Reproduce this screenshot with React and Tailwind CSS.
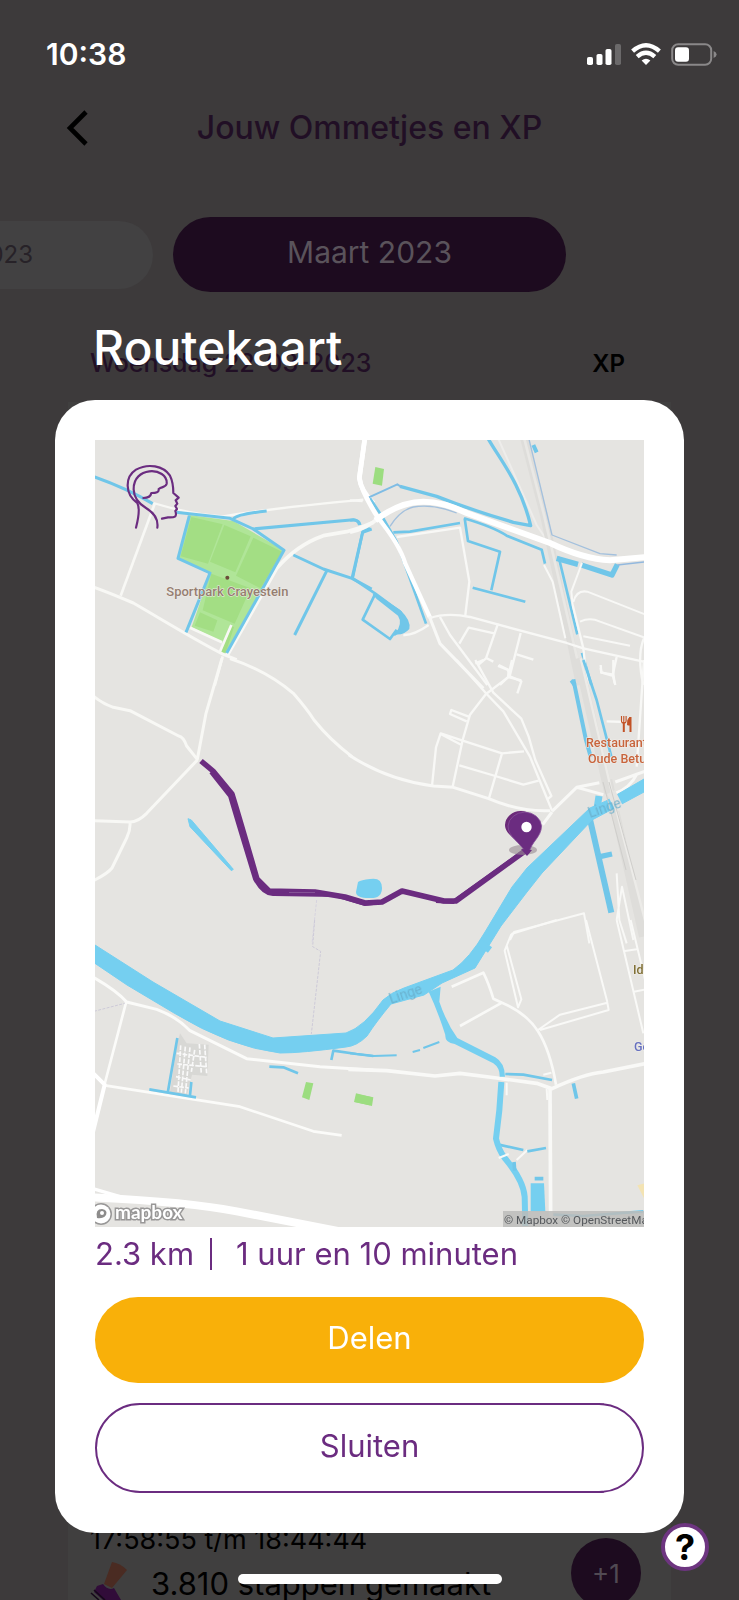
import React from "react";

const WATER = "#75cff0";
const DITCH = "#70c6e9";
const PURPLE = "#6b2c80";

function StatusBar() {
  return (
    <div className="mt-8 flex h-11 items-center justify-between pl-[46px] pr-[22px]">
      <span className="text-[30px] leading-[44px] font-semibold text-white">10:38</span>
      <div className="flex items-center gap-[10px]">
        <svg width="34" height="22" viewBox="0 0 34 22" aria-hidden="true">
          <rect x="0" y="14" width="6" height="8" rx="1.8" fill="#fff" />
          <rect x="9.5" y="11" width="6" height="11" rx="1.8" fill="#fff" />
          <rect x="18.5" y="6" width="6" height="16" rx="1.8" fill="#fff" />
          <rect x="28" y="1" width="6" height="21" rx="1.8" fill="#6b696a" />
        </svg>
        <svg width="30" height="22" viewBox="0 0 30 22" aria-hidden="true">
          <g fill="none" stroke="#fff" strokeWidth="4.4">
            <path d="M1.6 8.2 Q15 -3.6 28.4 8.2" />
            <path d="M6.2 13.6 Q15 6 23.8 13.6" />
          </g>
          <path d="M10.6 17.6 Q15 14 19.4 17.6 L15 22Z" fill="#fff" />
        </svg>
        <svg width="46" height="23" viewBox="0 0 46 23" aria-hidden="true">
          <rect x="1.2" y="1.2" width="39" height="20.6" rx="6" fill="none" stroke="#8a8889" strokeWidth="2" />
          <rect x="4" y="4.3" width="14" height="14.4" rx="3" fill="#fff" />
          <path d="M42.6 8 Q45.6 9.4 45.6 11.5 T42.6 15Z" fill="#8a8889" />
        </svg>
      </div>
    </div>
  );
}

function ActivityPage() {
  return (
    <div className="col-start-1 row-start-1 flex min-w-0 flex-col overflow-hidden">
      <StatusBar />
      <header className="mt-6 grid h-14 grid-cols-[108px_1fr_108px] items-center">
        <button type="button" aria-label="Terug" className="flex h-14 items-center pl-[66px]">
          <svg width="22" height="36" viewBox="0 0 22 36" aria-hidden="true">
            <path d="M20 2 L4 18 L20 34" fill="none" stroke="#000" strokeWidth="4.6" />
          </svg>
        </button>
        <h1 className="text-center text-[32px] leading-[48px] font-medium text-[#210f25]">Jouw Ommetjes en XP</h1>
      </header>

      <div className="mt-[61px] flex items-center gap-5">
        <button
          type="button"
          className="flex h-[68px] w-[153px] shrink-0 items-center justify-end rounded-r-[34px] bg-[#424142] pr-[120px] text-[24px] whitespace-nowrap text-[#272228]"
        >
          Februari 2023
        </button>
        <button
          type="button"
          className="h-[75px] w-[393px] shrink-0 rounded-full bg-[#1d0b1f] pb-1 text-[30px] text-[#5a535b]"
        >
          Maart 2023
        </button>
      </div>

      <div className="mt-[50px] flex h-11 items-center justify-between pl-[90px] pr-[114px]">
        <h2 className="text-[25px] font-medium text-[#210f25]">Woensdag 22-03-2023</h2>
        <span className="text-[24px] font-semibold text-black">XP</span>
      </div>

      <div className="mx-[68px] mt-4 flex flex-1 flex-col justify-end bg-[#403f3f] pr-[30px] pl-[22px] text-black">
        <div className="flex h-[76px] items-start justify-between">
          <div>
            <p className="text-[27px] leading-[32px]">17:58:55 t/m 18:44:44</p>
            <div className="mt-3 flex h-8 items-start gap-6">
              <svg className="mt-[-6px] shrink-0" width="37" height="38" viewBox="0 0 37 38" aria-hidden="true">
                <path d="M22 0 Q30 1 37 8 L22 26 L14 22Z" fill="#4a2b22" />
                <path d="M7 24 L13 22 Q18 29 24 26 L31 38 L13 38 L4 30Z" fill="#310c39" />
                <path d="M1 31 L9 38 M4 28 L15 38" fill="none" stroke="#16091a" strokeWidth="1.6" />
              </svg>
              <p className="text-[31px] leading-[32px] whitespace-nowrap">3.810 stappen gemaakt</p>
            </div>
          </div>
          <div className="mt-[14px] flex size-[70px] shrink-0 items-center justify-center rounded-full bg-[#1d0b1f] text-[26px] text-[#514a53]">
            +1
          </div>
        </div>
      </div>
    </div>
  );
}

function RouteMap() {
  return (
    <svg
      viewBox="95 440 549 787"
      className="block h-auto w-full overflow-hidden bg-[#e5e4e1] font-[Roboto,sans-serif]"
      role="img"
      aria-label="Routekaart"
    >
      {/* north-west */}
      <g transform="translate(90 435) scale(.33333)" fill="none" strokeLinejoin="round">
        <path d="M298 240 L430 258 L582 346 L408 654 L388 656 L398 622 L305 576 L360 416 L264 370Z" fill="#b0e598" />
        <path d="M304 246 L398 268 L354 386 L272 364Z M403 270 L482 304 L436 412 L360 380Z M490 308 L576 350 L512 460 L438 422Z M364 416 L482 460 L434 566 L338 526Z M330 532 L382 556 L370 590 L314 572Z M422 572 L432 576 L408 650 L390 656Z" fill="#a3de84" />
        <g stroke="#f8f8f5" strokeWidth="8">
          <path d="M195 204 L92 482" />
          <path d="M190 204 Q310 240 400 244 Q560 218 820 194" strokeWidth="7" />
          <path d="M10 456 Q60 474 130 504 C220 556 320 618 400 658 L440 674" strokeWidth="9" />
          <path d="M410 664 L560 400 Q620 330 700 302 L770 290 Q810 280 850 262" strokeWidth="11" />
          <path d="M398 664 L374 752 M300 578 L396 622 M424 570 L388 654" strokeWidth="8" />
          <path d="M826 0 L808 130 Q812 165 850 205" stroke="#fff" strokeWidth="14" />
        </g>
        <g stroke={DITCH} strokeWidth="9">
          <path d="M14 126 Q110 160 188 206 M258 232 L420 250 L490 282 L582 346 L410 654 M298 242 L264 370 L360 414 L288 592" />
          <path d="M430 252 Q440 238 530 228 M488 282 L790 254 Q808 256 810 270 M610 360 L700 402 L786 430 L845 462 M712 404 L614 600 M786 430 L818 292 L845 282" />
        </g>
        <g stroke={PURPLE} strokeWidth="6.5" strokeLinecap="round">
          <path d="M138 278 C148 240 148 216 142 204 C104 178 104 126 138 104 C174 84 220 92 240 122 C250 142 250 160 250 174 L266 188 L257 196 L262 206 L256 213 L261 222 L256 228 C262 246 254 248 234 247 L216 251" />
          <path d="M202 278 C206 248 190 232 168 219 C144 205 132 190 131 164 C130 128 154 112 178 109 C206 106 232 121 230 146 C228 158 216 154 206 162 C208 172 198 174 184 174 C182 186 174 189 160 189" />
        </g>
        <circle cx="412" cy="428" r="6" fill="#6b4c39" />
        <text x="412" y="482" fontSize="39" fontWeight="500" textAnchor="middle" fill="#967e71" stroke="#f0eeea" strokeWidth="3" paintOrder="stroke">Sportpark Crayestein</text>
      </g>

      {/* north-east */}
      <g transform="translate(350 435) scale(.33333)" fill="none" strokeLinejoin="round">
        <path d="M440 0 L560 270 L600 330 L690 750" stroke="#eeedeb" strokeWidth="6" />
        <path d="M520 0 L582 240 L690 750" stroke="#dedddA" strokeWidth="24" />
        <path d="M520 0 L582 240 L700 750" stroke="#e9e8e5" strokeWidth="8" />
        <g stroke={DITCH} strokeWidth="8">
          <path d="M408 0 C450 76 510 140 542 272 L490 262 Q360 224 260 184 L150 154" strokeWidth="10" />
          <path d="M55 188 L142 148 L154 156" stroke="#7fbce4" strokeWidth="6" />
          <path d="M120 274 Q150 226 190 216 Q250 206 320 234 M534 0 L606 300 M606 300 L750 356 L800 360" stroke="#a3c0dd" strokeWidth="4" />
          <path d="M130 292 L180 290 L330 264" />
          <path d="M342 250 Q430 276 470 302 L575 344 L585 386 M344 250 L354 318 L450 350 L424 466 M368 458 L526 500" />
          <path d="M60 190 L100 250 L140 320 L228 566" />
          <path d="M0 256 Q24 250 28 270 M60 280 L38 290 L8 430 L76 476 L152 532 L168 574 L132 600 M76 476 L38 554 L120 612 L140 584" />
          <path d="M620 370 L684 388 M694 390 L786 420 L802 388" strokeWidth="16" />
          <path d="M802 390 L890 380" stroke="#92b8de" strokeWidth="5" />
          <path d="M626 366 L682 598 M696 654 L724 750" />
          <path d="M664 736 L674 750 M550 30 L560 52" strokeWidth="12" />
        </g>
        <path d="M68 478 L76 476 L150 524 Q184 556 178 582 Q160 602 134 598 Q160 566 144 542 L80 492Z" fill={DITCH} />
        <g stroke="#f8f8f6" strokeWidth="7">
          <path d="M46 0 L28 128 Q34 170 85 250" strokeWidth="14" stroke="#fff" />
          <path d="M82 246 Q150 330 166 386 L240 548" strokeWidth="13" stroke="#fff" />
          <path d="M238 544 L270 626 L400 760" strokeWidth="9" />
          <path d="M0 292 Q50 280 90 246" strokeWidth="11" />
          <path d="M76 256 Q150 200 220 200 Q280 200 350 234 L600 324 Q700 372 780 376 L890 366" strokeWidth="18" stroke="#fff" />
          <path d="M0 196 L38 198 M140 306 L330 278 L358 440 L346 540 M238 550 Q290 532 360 546 L650 624 L700 640 L880 680" />
          <path d="M160 600 Q190 602 236 570 M270 546 L300 600 L412 750 M328 626 L356 578 L436 596 M444 566 L408 670 L384 690 M410 670 L430 680" />
          <path d="M512 594 L480 720 L450 750 M500 658 L550 674 M446 690 L478 706 L474 726 L514 736" />
          <path d="M582 390 L608 440 L646 610 M696 384 L664 470 L668 510 M670 500 Q680 464 712 470 L890 540 M690 560 Q720 546 750 560 L890 610 M700 604 L840 632" strokeWidth="6" />
          <path d="M668 510 L700 640 L712 750 M800 666 L788 720 L796 750 M752 690 L754 712 L786 722 M882 610 Q860 660 880 750" />
        </g>
        <path d="M76 96 L102 102 L96 152 L68 146Z" fill="#9cdd80" />
      </g>

      {/* centre-west */}
      <g transform="translate(90 660) scale(.33333)" fill="none" strokeLinejoin="round">
        <g stroke="#f8f8f5" strokeWidth="9">
          <path d="M396 -5 L348 160 L322 298 L290 258 Q280 230 266 228 L120 152 L70 142 Q36 130 10 108" />
          <path d="M322 300 L170 460 Q144 486 120 486 L10 482 M120 486 Q122 510 110 534 L66 624 Q54 640 10 662" />
          <path d="M420 -4 Q530 32 610 100 Q650 146 672 180 Q720 240 786 290" />
        </g>
        <path d="M680 720 L666 850" stroke="#d6d3df" strokeWidth="3" strokeDasharray="9 4" />
        <path d="M294 476 L304 480 L430 628 L424 632 L300 500Z" fill={WATER} stroke={WATER} strokeWidth="3" />
      </g>

      {/* centre-east */}
      <g transform="translate(350 660) scale(.33333)" fill="none" strokeLinejoin="round">
        <path d="M684 -5 L776 400 M774 360 L880 830" stroke="#deddda" strokeWidth="26" />
        <path d="M692 -5 L786 400 L895 820" stroke="#ecebe8" strokeWidth="7" />
        <g stroke="#f8f8f6" strokeWidth="7">
          <path d="M-4 284 Q110 360 250 378 L310 382 L416 416 Q510 456 600 452" strokeWidth="9" />
          <path d="M320 0 L410 102 L460 154 L540 290 L606 452 M376 0 L430 98 L514 176 L536 230 L556 300 L604 408 L592 418 L540 290" />
          <path d="M486 0 L474 52 L408 102 L360 164 L338 240 L308 380 M350 184 L300 162 L304 150 L356 170 M338 242 L272 220 L258 262 L246 378 M272 222 L336 256" />
          <path d="M338 242 L456 280 L522 274 M328 316 L436 348 L520 374 L566 362 M456 280 L416 418" />
          <path d="M606 456 L578 494 M606 454 L680 382 L748 368 M680 382 L760 404 M796 366 L890 332 M796 400 Q840 384 862 340" strokeWidth="9" />
          <path d="M376 10 L400 0 M444 18 L474 30 L478 48 L514 64 L502 100 M790 0 L790 42 L794 70 M752 24 L754 38 L790 44 M770 184 L830 186 M882 0 L860 320" />
          <path d="M480 840 L492 816 L702 760 L718 850 M800 640 L808 780 L830 850 M800 780 L816 680 L850 840" strokeWidth="6" />
        </g>
        <g stroke={DITCH}>
          <path d="M670 58 L708 240 L722 290" strokeWidth="12" />
          <path d="M700 0 L740 120 L784 290" strokeWidth="8" />
          <path d="M720 478 L784 758" strokeWidth="18" />
          <path d="M750 590 L786 582" strokeWidth="16" />
        </g>
      </g>

      {/* south-west */}
      <g transform="translate(90 920) scale(.33333)" fill="none" strokeLinejoin="round">
        <g stroke="#fbfbf9" strokeWidth="9">
          <path d="M10 172 Q80 212 110 246 L200 268 Q260 290 300 332 L470 416 L690 440 L850 450" />
          <path d="M108 248 L44 492 M44 496 L450 560 L670 634 L755 646" strokeWidth="8" />
          <path d="M8 458 L44 494 L8 640" stroke="#fff" strokeWidth="12" />
          <path d="M10 832 Q300 846 440 874 L780 940" stroke="#fff" strokeWidth="24" />
          <path d="M10 806 L90 830" stroke="#fff" strokeWidth="10" />
        </g>
        <path d="M12 274 L104 250 M674 0 L668 80 L692 94 L664 342" stroke="#cdcad8" strokeWidth="3" strokeDasharray="9 4" />
        <path d="M270 340 L290 370 L356 374 L352 468 L306 464 L290 528 L240 516 L260 380Z" fill="#d8d8d5" />
        <path d="M272 376 L264 516 M286 380 L274 518 M300 382 L286 520 M314 390 L304 456 M328 372 L334 462 M344 374 L350 462 M260 400 L350 412 M262 432 L350 440 M258 470 L302 480 M250 498 L296 504" stroke="#f9f9f9" strokeWidth="5" strokeDasharray="14 4" />
        <g stroke={DITCH} strokeWidth="8">
          <path d="M262 354 L234 514 M178 508 L318 532 M304 486 L300 526" />
          <path d="M538 440 L580 442 L624 460 M724 420 L730 392 L800 402 L850 408" />
        </g>
        <path d="M648 486 L670 490 L658 540 L636 532Z M800 522 L850 532 L846 558 L794 546Z" fill="#9cdd80" />
      </g>

      {/* south-east */}
      <g transform="translate(350 920) scale(.33333)" fill="none" strokeLinejoin="round">
        <g stroke="#f9f9f7" strokeWidth="8">
          <path d="M-5 448 L110 452 L255 468 L330 460 L440 474 L560 490 L606 506 Q700 462 760 456 L890 430" strokeWidth="11" />
          <path d="M305 200 L400 158 Q416 190 430 236 L456 248 L330 318 M456 248 Q530 280 564 334 Q600 390 618 494" />
          <path d="M484 42 L464 92 L504 262 L514 238 L470 76 M564 330 L630 284 L772 248 L776 270 L570 330 M772 246 L708 0 M484 42 L620 0" strokeWidth="6" />
          <path d="M600 506 L602 890" strokeWidth="11" />
          <path d="M470 488 L470 526 M590 506 L592 540 M500 720 L532 690 M580 464 L604 458" strokeWidth="6" />
          <path d="M800 0 L880 340 M842 0 L890 200 M820 94 L860 88 M848 216 L890 208" strokeWidth="6" />
        </g>
        <g stroke={DITCH}>
          <path d="M0 400 L70 408 L140 406 M188 396 L210 390 M220 384 L268 366" strokeWidth="6" />
          <path d="M466 462 L520 464 L606 480 M446 674 L520 690 M532 694 L588 684 M610 884 L700 888 L880 874" strokeWidth="8" />
          <path d="M454 486 Q450 570 438 656 Q446 690 464 714 Q520 780 524 830 L526 918" stroke={WATER} strokeWidth="18" />
          <path d="M492 726 L494 752 M670 490 L680 536 M554 776 L580 776" strokeWidth="11" />
        </g>
        <path d="M542 790 L582 790 L586 874 L542 874Z" fill={WATER} />
        <path d="M236 215 L272 200 L268 245 Q290 310 322 354 L436 412 Q464 428 465 470 L449 470 Q450 444 430 430 L314 372 Q284 368 286 345 Q262 270 236 215Z" fill={WATER} />
        <path d="M446 714 L476 702" stroke="#f9f9f7" strokeWidth="6" />
        <path d="M18 520 L66 532 L60 556 L12 546Z" fill="#9cdd80" />
        <path d="M862 796 L890 788 L890 850Z" fill="#f3e3b3" />
      </g>

      {/* river */}
      <path
        d="M90 941 L95 945 L153 982 L220 1021 L273 1038 L346 1033 Q364 1027 383 1000 Q392 992 404 988 L453 970 Q470 958 485 932 L512 887 L527 868 L590 808 L606 801 L644 779 L644 792 L607 812 L592 820 L542 873 L527 892 L501 926 L475 968 L442 983 L424 995 L391 1004 Q376 1022 367 1036 Q357 1046 346 1047 Q302 1053 280 1053 Q230 1047 174 1013 L127 985 L90 960Z"
        fill={WATER}
        stroke={WATER}
        strokeWidth="1"
      />
      <path d="M479 942 L490 950 M599 796 L596 815" stroke={WATER} strokeWidth="7" />
      <path d="M611 792 L620 810" stroke="#e5e4e1" strokeWidth="9" />
      <path d="M603 782 L626 870 M609 782 L636 880" stroke="#cfcecb" strokeWidth="1" />
      <path d="M358 882 Q361 880 370 879 Q382 877 382 888 Q382 899 369 898 Q356 898 356 892Z" fill={WATER} />

      <g fontSize="14" fill="#69aecb" opacity=".85">
        <text x="391" y="1004" transform="rotate(-19 391 1004)">Linge</text>
        <text x="590" y="818" transform="rotate(-19 590 818)">Linge</text>
      </g>

      {/* walked route */}
      <path
        d="M201 761 L213 771 L232 794 Q240 820 257 879 L269 891 L315 892 L345 897 L365 903 L382 902 L402 891 L444 901 L456 901 L525 851"
        fill="none"
        stroke={PURPLE}
        strokeWidth="5.5"
        strokeLinejoin="round"
      />
      <path d="M211 772 L230 796 Q240 830 255 879 Q264 895 274 894 L335 895 L365 904 L382 902 M436 901 L453 902 L527 849" fill="none" stroke={PURPLE} strokeWidth="4" />
      <path d="M289 892.5 L315 892.5" stroke="#8c5d9c" strokeWidth=".8" />
      <ellipse cx="523" cy="850" rx="14" ry="5" fill="#968b91" opacity=".6" />
      <path d="M525 852 C521 840 505 836 505 825 A15.5 14.5 0 0 1 521 811 Q534 811 533 826Z" fill="#6b2978" />
      <path d="M526 853 C520 842 508 837 508 826 A16.8 15 0 0 1 541.5 826 C541.5 837 531 842 529 853Z" fill={PURPLE} stroke="#86509a" strokeWidth=".8" />
      <path d="M521 849 L527 856 L532 850Z" fill={PURPLE} />
      <circle cx="526.5" cy="827" r="5.2" fill="#fff" />

      {/* places */}
      <g fontWeight="500" fontSize="12.5" stroke="#f0eeea" strokeWidth="1" paintOrder="stroke">
        <text x="586" y="747" fill="#c8643c">Restaurant</text>
        <text x="588" y="763" fill="#c8643c">Oude Betuwe</text>
        <text x="633" y="974" fill="#807036">Ideal</text>
        <text x="634" y="1051" fill="#6670bf">Gemeente</text>
      </g>
      <g fill="none" stroke="#c25226">
        <path d="M621.5 716 v5 q0 2 2.3 2 t2.3 -2 v-5 M623.8 716 v6" strokeWidth="1.1" />
        <path d="M623.8 722 V732 M630.5 717 V732" strokeWidth="2" />
        <path d="M630 717 q-3 2 -2.4 8 h2.4" strokeWidth="1" fill="#c25226" />
      </g>

      {/* credits */}
      <g stroke="#989797" strokeWidth="3" paintOrder="stroke" fill="#fff">
        <circle cx="101" cy="1214" r="9.5" />
        <text x="115" y="1219" fontSize="19" fontWeight="700" fontFamily="Lato, sans-serif">mapbox</text>
      </g>
      <path d="M97 1218 Q95 1209 102 1209 Q108 1210 106 1215 Q103 1219 97 1218Z" fill="#8d8c8b" />
      <circle cx="102" cy="1213" r="2" fill="#fff" />
      <rect x="503" y="1211" width="141" height="16" fill="#bcbcba" opacity=".85" />
      <text x="504" y="1224" fontSize="11.7" fill="#55585c">© Mapbox © OpenStreetMap</text>
    </svg>
  );
}

function RouteDialog() {
  return (
    <div className="relative z-10 col-start-1 row-start-1 flex min-w-0 flex-col px-[55px] pt-[320px] pb-[66px]">
      <h2 id="route-title" className="mb-6 pl-[38px] text-[48px] leading-[56px] font-medium text-white">
        Routekaart
      </h2>
      <section role="dialog" aria-labelledby="route-title" className="rounded-[40px] bg-white p-10 text-[#6b2c80]">
        <RouteMap />
        <p className="mb-4 flex h-[54px] items-center text-[31px] whitespace-nowrap">
          <span>2.3 km</span>
          <span className="mx-4 h-8 w-[2px] bg-[#6b2c80]" />
          <span className="pl-2">1 uur en 10 minuten</span>
        </p>
        <div className="flex flex-col gap-5">
          <button type="button" className="h-[86px] rounded-full bg-[#f9b009] pb-1 text-[31px] text-white">
            Delen
          </button>
          <button type="button" className="h-[90px] rounded-full border-2 border-[#6b2c80] bg-white pb-1 text-[31px]">
            Sluiten
          </button>
        </div>
      </section>
    </div>
  );
}

export default function App() {
  return (
    <main className="relative grid min-h-screen grid-cols-1 overflow-hidden bg-[#3d3a3b] font-[Inter,sans-serif]">
      <ActivityPage />
      <RouteDialog />
      <button
        type="button"
        aria-label="Help"
        className="absolute right-[30px] bottom-[29px] z-20 flex size-12 items-center justify-center rounded-full border-4 border-[#6d3580] bg-white text-[36px] leading-none font-bold text-black"
      >
        ?
      </button>
      <div className="absolute bottom-4 left-1/2 z-20 h-[10px] w-[264px] -translate-x-1/2 rounded-full bg-white" />
    </main>
  );
}
